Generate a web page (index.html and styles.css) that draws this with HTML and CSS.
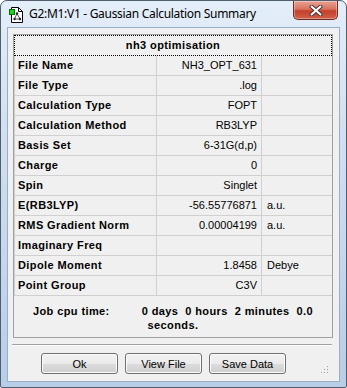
FILE: index.html
```html
<!DOCTYPE html>
<html lang="en">
<head>
    <meta charset="UTF-8">
    <meta name="viewport" content="width=device-width, initial-scale=1.0">
    <title>Gaussian Calculation Summary</title>
    <link rel="stylesheet" href="styles.css">
</head>
<body>
    <div class="window">
        <div class="titlebar">
            <svg class="app-icon" width="14" height="16" viewBox="0 0 14 16">
                <path d="M2.5 0.5 H9.5 L13.5 4.5 V15.5 H2.5 Z" fill="#fff" stroke="#000"/>
                <path d="M9.5 0.5 V4.5 H13.5" fill="none" stroke="#000"/>
                <path d="M8 6.5 L5.5 12 M8 6.5 L11 12 M5.5 12 H11" stroke="#555" stroke-width="1"/>
                <circle cx="8" cy="6.5" r="1.2" fill="#222"/>
                <circle cx="5.5" cy="12" r="1.2" fill="#222"/>
                <circle cx="11" cy="12" r="1.2" fill="#222"/>
                <rect x="0.5" y="2.5" width="5" height="5" fill="#1ed21e" stroke="#0a6a0a"/>
            </svg>
            <span class="title">G2:M1:V1 - Gaussian Calculation Summary</span>
            <button class="close" title="Close">
                <svg width="14" height="11" viewBox="0 0 14 11">
                    <path d="M2.5 1.5 L11.5 9.5 M11.5 1.5 L2.5 9.5" stroke="#4a3434" stroke-width="4" stroke-linecap="round"/>
                    <path d="M2.5 1.5 L11.5 9.5 M11.5 1.5 L2.5 9.5" stroke="#fff" stroke-width="2" stroke-linecap="round"/>
                </svg>
            </button>
        </div>

        <div class="client">
            <div class="panel">
                <div class="caption">nh3 optimisation</div>
                <div class="grid">
                    <div class="label">File Name</div><div class="value">NH3_OPT_631</div><div class="unit"></div>
                    <div class="label">File Type</div><div class="value">.log</div><div class="unit"></div>
                    <div class="label">Calculation Type</div><div class="value">FOPT</div><div class="unit"></div>
                    <div class="label">Calculation Method</div><div class="value">RB3LYP</div><div class="unit"></div>
                    <div class="label">Basis Set</div><div class="value">6-31G(d,p)</div><div class="unit"></div>
                    <div class="label">Charge</div><div class="value">0</div><div class="unit"></div>
                    <div class="label">Spin</div><div class="value">Singlet</div><div class="unit"></div>
                    <div class="label">E(RB3LYP)</div><div class="value">-56.55776871</div><div class="unit">a.u.</div>
                    <div class="label">RMS Gradient Norm</div><div class="value">0.00004199</div><div class="unit">a.u.</div>
                    <div class="label">Imaginary Freq</div><div class="value"></div><div class="unit"></div>
                    <div class="label">Dipole Moment</div><div class="value">1.8458</div><div class="unit">Debye</div>
                    <div class="label">Point Group</div><div class="value">C3V</div><div class="unit"></div>
                </div>
                <p class="cpu">
                    <span class="cpu-label">Job cpu time:</span><span class="cpu-value">0 days&nbsp; 0 hours&nbsp; 2 minutes&nbsp; 0.0</span><br>seconds.
                </p>
            </div>

            <div class="separator"></div>

            <div class="buttons">
                <button class="btn">Ok</button>
                <button class="btn">View File</button>
                <button class="btn">Save Data</button>
            </div>

            <svg class="grip" width="8" height="8" viewBox="0 0 8 8">
                <rect x="6" y="0" width="1" height="1" fill="#a0a0a0"/>
                <rect x="3" y="3" width="1" height="1" fill="#a0a0a0"/>
                <rect x="6" y="3" width="1" height="1" fill="#a0a0a0"/>
                <rect x="0" y="6" width="1" height="1" fill="#a0a0a0"/>
                <rect x="3" y="6" width="1" height="1" fill="#a0a0a0"/>
                <rect x="6" y="6" width="1" height="1" fill="#a0a0a0"/>
            </svg>
        </div>
    </div>
</body>
</html>
```

FILE: styles.css
```css
* {
    margin: 0;
    padding: 0;
    box-sizing: border-box;
}

body {
    background: #ffffff;
    font-family: 'Liberation Sans', Arial, sans-serif;
    font-size: 11px;
    color: #000;
}

.window {
    width: 347px;
    height: 388px;
    border: 1px solid #4f5d6e;
    border-radius: 7px 7px 2px 2px;
    background: linear-gradient(180deg, #e4eef9 0%, #d3e1f1 30%, #c3d6ec 70%, #b8cde6 100%);
    overflow: hidden;
}

.titlebar {
    height: 26px;
    display: flex;
    align-items: flex-start;
}

.app-icon {
    margin: 6px 0 0 8px;
    flex-shrink: 0;
}

.title {
    font-family: 'Noto Sans', 'Open Sans', sans-serif;
    font-size: 12px;
    letter-spacing: -0.3px;
    margin: 4px 0 0 6px;
    color: #000;
    white-space: nowrap;
}

.close {
    margin-left: auto;
    margin-right: 8px;
    width: 45px;
    height: 19px;
    border: 1px solid #6d2a22;
    border-top: none;
    border-radius: 0 0 5px 5px;
    background: linear-gradient(180deg, #e8a493 0%, #d8725e 45%, #c4402a 55%, #d0604a 100%);
    display: flex;
    align-items: center;
    justify-content: center;
    box-shadow: inset 0 0 0 1px rgba(255, 255, 255, 0.35);
}

.client {
    position: relative;
    margin: 0 6px;
    height: 355px;
    border: 1px solid #9aaec6;
    background: #f0f0f0;
    padding: 6px 0 0 5px;
}

.panel {
    width: 320px;
    height: 304px;
    border: 1px solid #a0a0a0;
    background: #f0f0f0;
}

.caption {
    height: 21px;
    border: 1px dotted #000;
    width: 318px;
    text-align: center;
    font-weight: bold;
    font-size: 11px;
    letter-spacing: 0.4px;
    line-height: 19px;
}

.grid {
    display: grid;
    grid-template-columns: 143px 105px 70px;
    grid-auto-rows: 20px;
}

.grid > div {
    border-right: 1px solid #d0d0d0;
    border-bottom: 1px solid #d0d0d0;
    line-height: 19px;
    white-space: nowrap;
}

.grid > .label {
    border-left: 1px solid #d0d0d0;
    font-weight: bold;
    letter-spacing: 0.4px;
    padding-left: 3px;
}

.grid > .value {
    text-align: right;
    padding-right: 4px;
}

.grid > .unit {
    padding-left: 5px;
    border-right: none;
}

.cpu {
    text-align: center;
    font-weight: bold;
    letter-spacing: 0.4px;
    line-height: 14px;
    padding-top: 8px;
}

.cpu-value {
    margin-left: 32px;
}

.separator {
    width: 320px;
    margin: 6px 0 0 -1px;
    height: 2px;
    border-top: 1px solid #a0a0a0;
    border-bottom: 1px solid #ffffff;
}

.buttons {
    display: flex;
    gap: 7px;
    margin: 7px 0 0 28px;
}

.btn {
    width: 77px;
    height: 21px;
    font-family: 'Liberation Sans', Arial, sans-serif;
    font-size: 11px;
    color: #000;
    border: 1px solid #707070;
    border-radius: 3px;
    background: linear-gradient(180deg, #f2f2f2 0%, #ebebeb 50%, #dddddd 51%, #cfcfcf 100%);
    box-shadow: inset 0 0 0 1px #fcfcfc;
}

.grip {
    position: absolute;
    right: 10px;
    bottom: 7px;
}
```
